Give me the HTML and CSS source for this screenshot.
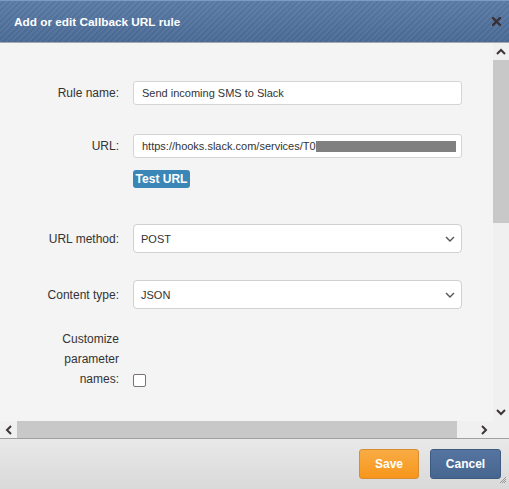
FILE: index.html
```html
<!DOCTYPE html>
<html>
<head>
<meta charset="utf-8">
<link rel="stylesheet" href="styles.css">
</head>
<body>
<div class="dialog">
  <div class="titlebar">
    <span class="title">Add or edit Callback URL rule</span>
    <svg class="close" width="9" height="9" viewBox="0 0 9 9"><path d="M1 1 L8 8 M8 1 L1 8" stroke="#3a3034" stroke-width="2.4" stroke-linecap="square"/></svg>
  </div>
  <div class="viewport">
    <div class="content">
      <div class="row r-name">
        <label class="lbl">Rule name:</label>
        <div class="input">Send incoming SMS to Slack</div>
      </div>
      <div class="row r-url">
        <label class="lbl">URL:</label>
        <div class="input url">https://hooks.slack.com/services/T0<span class="redact"></span></div>
      </div>
      <div class="row r-test">
        <span class="lbl"></span>
        <button class="test">Test URL</button>
      </div>
      <div class="row r-method">
        <label class="lbl">URL method:</label>
        <div class="select">POST<svg class="chev" width="10" height="6" viewBox="0 0 10 6"><path d="M1 1 L5 5 L9 1" fill="none" stroke="#555" stroke-width="1.4"/></svg></div>
      </div>
      <div class="row r-type">
        <label class="lbl">Content type:</label>
        <div class="select">JSON<svg class="chev" width="10" height="6" viewBox="0 0 10 6"><path d="M1 1 L5 5 L9 1" fill="none" stroke="#555" stroke-width="1.4"/></svg></div>
      </div>
      <div class="row r-custom">
        <label class="lbl multi">Customize<br>parameter<br>names:</label>
        <span class="checkbox"></span>
      </div>
    </div>
    <div class="vscroll">
      <div class="sbtn"><svg width="10" height="7" viewBox="0 0 10 7"><path d="M1 6 L5 2 L9 6" fill="none" stroke="#3d3438" stroke-width="2"/></svg></div>
      <div class="vthumb"></div>
      <div class="vtrack"></div>
      <div class="sbtn"><svg width="10" height="7" viewBox="0 0 10 7"><path d="M1 1 L5 5 L9 1" fill="none" stroke="#3d3438" stroke-width="2"/></svg></div>
    </div>
    <div class="hscroll">
      <div class="sbtn hb"><svg width="7" height="10" viewBox="0 0 7 10"><path d="M6 1 L2 5 L6 9" fill="none" stroke="#3d3438" stroke-width="2"/></svg></div>
      <div class="hthumb"></div>
      <div class="htrack"></div>
      <div class="sbtn hb"><svg width="7" height="10" viewBox="0 0 7 10"><path d="M1 1 L5 5 L1 9" fill="none" stroke="#3d3438" stroke-width="2"/></svg></div>
    </div>
    <div class="corner"></div>
  </div>
  <div class="footer">
    <button class="btn save">Save</button>
    <button class="btn cancel">Cancel</button>
    <svg class="grip" width="8" height="8" viewBox="0 0 8 8"><path d="M7 1 L1 7 M7 3 L3 7 M7 5 L5 7" stroke="#999" stroke-width="1"/></svg>
  </div>
</div>
</body>
</html>
```
FILE: styles.css
```css
html, body {
  margin: 0;
  padding: 0;
}
body {
  width: 509px;
  height: 489px;
  overflow: hidden;
  font-family: "Liberation Sans", Arial, sans-serif;
  background: #f4f4f4;
}
.dialog {
  width: 509px;
  height: 489px;
  display: flex;
  flex-direction: column;
}
.titlebar {
  height: 41px;
  border-top: 1px solid #7d9bc0;
  border-bottom: 1px solid #a3a8ae;
  background:
    repeating-linear-gradient(135deg, rgba(255,255,255,0.04) 0 2px, rgba(0,0,0,0.03) 2px 4px),
    linear-gradient(#5b7ca7, #4b6b96);
  display: flex;
  align-items: center;
  justify-content: space-between;
  padding: 0 8px 0 14px;
  box-sizing: content-box;
}
.title {
  color: #fff;
  font-weight: bold;
  font-size: 11.8px;
}
.close {
  margin-top: -1px;
}
.viewport {
  display: grid;
  grid-template-columns: 493px 16px;
  grid-template-rows: 378px 17px;
  border-bottom: 1px solid #a0a0a0;
}
.content {
  background: #f4f4f4;
  padding-top: 38px;
  overflow: hidden;
}
.row {
  display: flex;
  align-items: center;
}
.lbl {
  width: 119px;
  margin-right: 14px;
  text-align: right;
  font-size: 12px;
  color: #333;
  flex: none;
}
.input {
  width: 319px;
  height: 22px;
  border: 1px solid #d4d4d4;
  border-radius: 3px;
  background: #fff;
  padding-left: 8px;
  font-size: 11px;
  color: #333;
  display: flex;
  align-items: center;
}
.redact {
  display: inline-block;
  width: 140px;
  height: 11px;
  background: #808080;
}
.r-url { margin-top: 29px; }
.r-test { margin-top: 12px; }
.test {
  background: #3a87b7;
  color: #fff;
  font-family: "Liberation Sans", Arial, sans-serif;
  font-weight: bold;
  font-size: 12px;
  border: none;
  border-radius: 3px;
  height: 18px;
  width: 57px;
  padding: 0;
  line-height: 18px;
}
.r-method { margin-top: 36px; }
.r-type { margin-top: 27px; }
.select {
  width: 320px;
  height: 27px;
  border: 1px solid #d0d0d0;
  border-radius: 4px;
  background: #fff;
  padding-left: 7px;
  font-size: 11px;
  color: #333;
  display: flex;
  align-items: center;
  justify-content: space-between;
  box-sizing: content-box;
}
.chev {
  margin-right: 6px;
  margin-top: 1px;
}
.r-custom {
  margin-top: 20px;
  align-items: flex-end;
}
.multi {
  line-height: 20px;
}
.checkbox {
  width: 11px;
  height: 11px;
  border: 1px solid #7a7178;
  border-radius: 2px;
  background: #fff;
  margin-bottom: 2px;
}
.vscroll {
  background: #f0f0f0;
  display: flex;
  flex-direction: column;
}
.sbtn {
  height: 17px;
  display: flex;
  align-items: center;
  justify-content: center;
  flex: none;
}
.vthumb {
  height: 163px;
  background: #c8c8c8;
  flex: none;
}
.vtrack { flex: 1; }
.hscroll {
  background: #f0f0f0;
  display: flex;
}
.hb {
  width: 17px;
  height: 17px;
}
.hthumb {
  width: 440px;
  background: #c8c8c8;
  flex: none;
}
.htrack { flex: 1; }
.corner { background: #f0f0f0; }
.footer {
  flex: 1;
  background: linear-gradient(#e9e9e9, #d9d9d9);
  display: flex;
  align-items: flex-start;
  justify-content: flex-end;
  padding: 10px 8px 0 0;
  gap: 11px;
  position: relative;
}
.btn {
  height: 30px;
  border-radius: 3px;
  color: #fff;
  font-family: "Liberation Sans", Arial, sans-serif;
  font-weight: bold;
  font-size: 12px;
  padding: 0;
  cursor: pointer;
}
.save {
  width: 60px;
  background: linear-gradient(#f9ac45, #f7961b);
  border: 1px solid #d88d33;
}
.cancel {
  width: 71px;
  background: linear-gradient(#5574a0, #46658f);
  border: 1px solid #3d5a80;
}
.grip {
  position: absolute;
  right: 2px;
  bottom: 5px;
}
```
